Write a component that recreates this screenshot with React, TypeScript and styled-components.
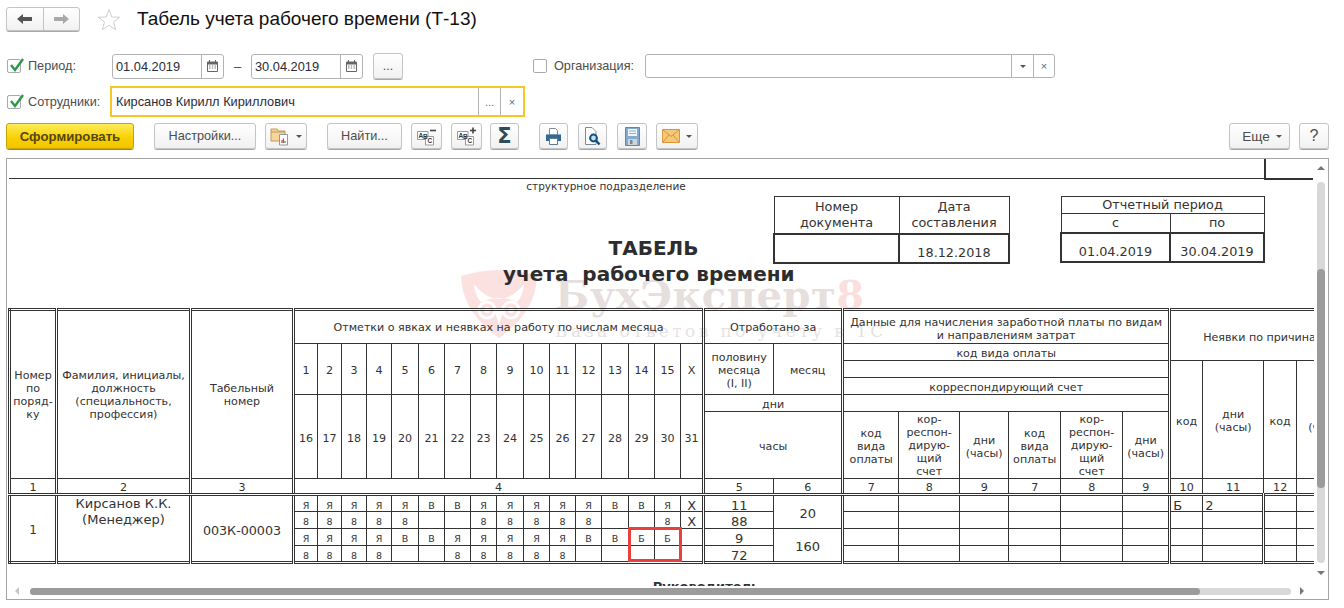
import React from "react";
import styled, {createGlobalStyle} from "styled-components";

const Global = createGlobalStyle`
  html, body {
    margin: 0;
    background: #fff;
    overflow: hidden;
  }
  body {
    font-family: "Liberation Sans", Arial, sans-serif;
    color: #333;
  }
`

const Page = styled.div`
  width: 1344px;
  height: 608px;
  overflow: hidden;
  display: flex;
  flex-direction: column;
`

const Header = styled.div`
  display: flex;
  align-items: center;
  height: 24px;
  margin: 7px 0 0 6px;
`

const NavGroup = styled.div`
  display: flex;
  width: 74px;
  height: 24px;
  box-sizing: border-box;
  border: 1px solid #c4c4c4;
  border-radius: 3px;
  box-shadow: 0 1px 0 #a8a8a8;
  background: linear-gradient(#fff, #f1f1f1);
`

const NavButton = styled.div<{$last?: boolean}>`
  flex: 1;
  display: flex;
  align-items: center;
  justify-content: center;
  border-left: ${p => p.$last ? "1px solid #c4c4c4" : "none"};
`

const Star = styled.svg`
  margin-left: 17px;
`

const Title = styled.div`
  margin-left: 16px;
  font-size: 19px;
  color: #111;
  white-space: nowrap;
`

const FilterRow = styled.div<{$height: number, $top: number}>`
  display: flex;
  align-items: center;
  height: ${p => p.$height}px;
  margin-top: ${p => p.$top}px;
  padding-left: 7px;
`

const Check = styled.div<{$left?: number}>`
  width: 14px;
  height: 14px;
  flex: none;
  margin-left: ${p => p.$left || 0}px;
  box-sizing: border-box;
  border: 1px solid #a9a9a9;
  border-radius: 2px;
  position: relative;
  background: #fff;
`

const CheckMark = styled.svg`
  position: absolute;
  left: 1px;
  top: -3px;
`

const Label = styled.div<{$width: number, $left?: number}>`
  flex: none;
  width: ${p => p.$width}px;
  margin-left: ${p => p.$left || 7}px;
  font-size: 12.7px;
  color: #4d4d4d;
  white-space: nowrap;
`

const Field = styled.div<{$width: number, $height?: number, $focus?: boolean}>`
  flex: none;
  display: flex;
  align-items: stretch;
  width: ${p => p.$width}px;
  height: ${p => p.$height || 25}px;
  box-sizing: border-box;
  border: ${p => p.$focus ? "2px solid #f6c624" : "1px solid #b3b3b3"};
  border-radius: ${p => p.$focus ? 0 : 3}px;
  background: #fff;
`

const FieldText = styled.div<{$pad?: number}>`
  flex: 1;
  display: flex;
  align-items: center;
  padding-left: ${p => p.$pad || 3}px;
  font-size: 12.8px;
  color: #2b2b38;
  white-space: nowrap;
`

const FieldButton = styled.div<{$width: number}>`
  flex: none;
  display: flex;
  align-items: center;
  justify-content: center;
  width: ${p => p.$width}px;
  border-left: 1px solid #b3b3b3;
  font-size: 11px;
  color: #666;
`

const Dash = styled.div`
  width: 27px;
  flex: none;
  text-align: center;
  font-size: 13px;
  color: #444;
`

const Toolbar = styled.div`
  display: flex;
  align-items: flex-start;
  height: 26px;
  margin-top: 6px;
  padding: 0 15px 0 6px;
`

const ToolButton = styled.div<{$width: number, $left?: number, $size?: number}>`
  flex: none;
  display: flex;
  align-items: center;
  justify-content: center;
  gap: 6px;
  width: ${p => p.$width}px;
  height: 26px;
  margin-left: ${p => p.$left || 0}px;
  box-sizing: border-box;
  border: 1px solid #c4c4c4;
  border-radius: 3px;
  box-shadow: 0 1px 0 #a8a8a8;
  background: linear-gradient(#fff, #f1f1f1);
  font-size: ${p => p.$size || 12.7}px;
  color: #4d4d4d;
  white-space: nowrap;
`

const PrimaryButton = styled(ToolButton)`
  border-color: #c9a400;
  box-shadow: 0 1px 0 #a98d10;
  background: linear-gradient(#fdeb5a, #f8d000 60%, #f2c500);
  font-weight: bold;
  font-size: 13.2px;
  color: #54470c;
`

const MoreButton = styled(ToolButton)`
  padding-left: 5px;
`

const Spacer = styled.div`
  flex: 1;
`

const Caret = styled.span`
  width: 0;
  height: 0;
  border-left: 3px solid transparent;
  border-right: 3px solid transparent;
  border-top: 3px solid #555;
`

const Sigma = styled.span`
  font-family: "DejaVu Sans", sans-serif;
  font-size: 21px;
  font-weight: bold;
  color: #2f4a58;
  line-height: 1;
`

const Frame = styled.div`
  display: grid;
  grid-template-columns: 1307px 14px;
  grid-template-rows: 427px 13px;
  width: 1323px;
  height: 442px;
  box-sizing: border-box;
  margin: 9px 0 0 6px;
  border: 1px solid #a5a5a5;
`

const Sheet = styled.div`
  position: relative;
  isolation: isolate;
  overflow: hidden;
  background: #fff;
  font-family: "DejaVu Sans", Verdana, sans-serif;
  font-size: 11.1px;
  line-height: 13px;
  color: #333;
`

const TopRule = styled.div`
  display: flex;
  height: 20px;
  padding-left: 2px;
`

const TopLine = styled.div`
  flex: 1;
  border-bottom: 1px solid #333;
`

const TopCorner = styled.div`
  flex: none;
  width: 47px;
  margin-right: 1px;
  height: 19px;
  border-left: 2px solid #333;
  border-bottom: 2px solid #333;
`

const SubCaption = styled.div`
  width: 1198px;
  height: 11px;
  margin-top: 2px;
  text-align: center;
  font-size: 10.5px;
  line-height: 11px;
`

const Middle = styled.div`
  display: flex;
  align-items: flex-start;
  height: 116px;
`

const TitleColumn = styled.div`
  flex: none;
  width: 766px;
  height: 116px;
  padding-top: 43px;
  box-sizing: border-box;
`

const FormTitle = styled.div<{$left: number}>`
  margin-left: ${p => p.$left}px;
  width: 291px;
  font-size: 20px;
  line-height: 26px;
  font-weight: bold;
  text-align: center;
  white-space: pre;
  color: #2d2d2d;
`

const DocTable = styled.table<{$left?: number}>`
  flex: none;
  margin: 4px 0 0 ${p => p.$left || 0}px;
  border-collapse: collapse;
  table-layout: fixed;
  font-size: 12.8px;
  line-height: 16px;
`

const DocCell = styled.td<{$width?: number, $height: number, $thick?: boolean}>`
  width: ${p => p.$width ? `${p.$width}px` : "auto"};
  height: ${p => p.$height}px;
  padding: ${p => p.$thick ? "0 0 1px" : 0};
  border: ${p => p.$thick ? "2px solid #333" : "1px solid #333"};
  text-align: center;
  vertical-align: ${p => p.$thick ? "bottom" : "middle"};
`

const TableWrap = styled.div`
  position: relative;
  width: 1350px;
  margin-left: 1px;
`

const Grid = styled.table<{$width: number}>`
  width: ${p => p.$width}px;
  border-collapse: collapse;
  table-layout: fixed;
  border: 3px double #333;
`

const Col = styled.col<{$width: number, $double?: boolean}>`
  width: ${p => p.$width}px;
  border-left: ${p => p.$double ? "3px double #333" : "none"};
`

const Row = styled.tr<{$height: number, $doubleBottom?: boolean}>`
  height: ${p => p.$height}px;
  border-bottom: ${p => p.$doubleBottom ? "3px double #333" : "none"};
`

const Cell = styled.td<{$size?: number, $left?: boolean, $align?: "flat" | "top" | "bottom", $double?: boolean, $tight?: boolean}>`
  padding: ${p => p.$align ? 0 : "3px"} 0 0 ${p => p.$left ? "2px" : 0};
  border: 1px solid #333;
  border-left: ${p => p.$double ? "3px double #333" : "1px solid #333"};
  text-align: ${p => p.$left ? "left" : "center"};
  vertical-align: ${p => p.$align === "top" || p.$align === "bottom" ? p.$align : "middle"};
  font-size: ${p => p.$size || 11.1}px;
  line-height: ${p => p.$align === "top" ? 16 : p.$tight ? 11 : 13}px;
  overflow: hidden;
  white-space: nowrap;
`

const Highlight = styled.div`
  position: absolute;
  left: 620px;
  top: 219px;
  width: 54px;
  height: 35px;
  box-sizing: border-box;
  border: 3px solid #e8403c;
`

const Signer = styled.div`
  width: 1398px;
  margin-top: 16px;
  text-align: center;
  font-weight: bold;
  font-size: 13px;
`

const Watermark = styled.div`
  position: absolute;
  left: 453px;
  top: 111px;
  z-index: -1;
  display: flex;
  gap: 17px;
`

const WatermarkText = styled.div`
  font-family: "DejaVu Serif", serif;
  white-space: nowrap;
`

const WatermarkName = styled.div`
  font-size: 40px;
  line-height: 50px;
  font-weight: bold;
  letter-spacing: 0.5px;
  color: #e7dfdd;
`

const WatermarkEight = styled.span`
  color: #fbdfde;
`

const WatermarkNote = styled.div`
  font-size: 17px;
  line-height: 22px;
  letter-spacing: 3.4px;
  color: #e6e2e2;
`

const VScroll = styled.div`
  display: flex;
  flex-direction: column;
  align-items: center;
  padding: 7px 0 0 0;
`

const Arrow = styled.span<{$dir: "up" | "down" | "left" | "right"}>`
  width: 0;
  height: 0;
  flex: none;
  border-style: solid;
  border-color: transparent;
  border-width: 4px;
  ${p => p.$dir === "up" ? "border-top-width: 0; border-bottom-color: #777;" : ""}
  ${p => p.$dir === "down" ? "border-bottom-width: 0; border-top-color: #777;" : ""}
  ${p => p.$dir === "left" ? "border-left-width: 0; border-right-color: #c4c4c4;" : ""}
  ${p => p.$dir === "right" ? "border-right-width: 0; border-left-color: #777;" : ""}
`

const VTrack = styled.div`
  width: 8px;
  height: 381px;
  margin: 12px 0 8px 0;
  padding-top: 87px;
  box-sizing: border-box;
  border-radius: 4px;
  background: #d8d8d8;
`

const VThumb = styled.div`
  height: 219px;
  border-radius: 4px;
  background: #9b9b9b;
`

const HScroll = styled.div`
  grid-column: 1 / -1;
  display: flex;
  align-items: center;
  padding: 0 0 3px 8px;
`

const HTrack = styled.div`
  width: 1261px;
  height: 7px;
  margin: 0 9px 0 11px;
  border-radius: 4px;
  background: #d8d8d8;
`

const HThumb = styled.div`
  width: 1170px;
  height: 7px;
  border-radius: 4px;
  background: #9b9b9b;
`

const edges = [10, 57, 191, 294, 318, 342, 367, 392, 419, 445, 471, 497, 524, 550, 576, 602, 629, 655, 681, 704, 774, 843, 899, 960, 1009, 1061, 1123, 1170, 1203, 1264, 1297, 1358];
const doubled = [1, 2, 3, 19, 21, 27];
const topDays = ["1", "2", "3", "4", "5", "6", "7", "8", "9", "10", "11", "12", "13", "14", "15", "Х"];
const lowDays = ["16", "17", "18", "19", "20", "21", "22", "23", "24", "25", "26", "27", "28", "29", "30", "31"];
const numbers = ["5", "6", "7", "8", "9", "7", "8", "9", "10", "11", "12", ""];
const marks = [
    ["Я", "Я", "Я", "Я", "Я", "В", "В", "Я", "Я", "Я", "Я", "Я", "В", "В", "Я", "Х"],
    ["8", "8", "8", "8", "8", "", "", "8", "8", "8", "8", "8", "", "", "8", "Х"],
    ["Я", "Я", "Я", "Я", "В", "В", "Я", "Я", "Я", "Я", "Я", "В", "В", "Б", "Б", ""],
    ["8", "8", "8", "8", "", "", "8", "8", "8", "8", "8", "", "", "", "", ""],
];
const worked = ["11", "88", "9", "72"];

const Icons = {
    Back: () => (
        <svg width="15" height="12" viewBox="0 0 15 12"><path d="M0 6 L6 1 V4 H15 V8 H6 V11 Z" fill="#555"/></svg>
    ),
    Forward: () => (
        <svg width="15" height="12" viewBox="0 0 15 12"><path d="M15 6 L9 1 V4 H0 V8 H9 V11 Z" fill="#a9a9a9"/></svg>
    ),
    Star: () => (
        <Star width="24" height="23" viewBox="0 0 24 23">
            <path d="M12 1.5 L14.8 9 L22.8 9.2 L16.5 14.1 L18.7 21.8 L12 17.3 L5.3 21.8 L7.5 14.1 L1.2 9.2 L9.2 9 Z" fill="#fff" stroke="#cfcfcf" strokeWidth="1"/>
        </Star>
    ),
    Mark: () => (
        <CheckMark width="16" height="16" viewBox="0 0 16 16">
            <path d="M2 8 L6 13 L14 2" fill="none" stroke="#2a9a4a" strokeWidth="2.4"/>
        </CheckMark>
    ),
    Calendar: () => (
        <svg width="11" height="12" viewBox="0 0 11 12">
            <path d="M0.5 2 H10.5 V11.5 H0.5 Z" fill="#fff" stroke="#666"/>
            <path d="M0 2 H11 V4.5 H0 Z" fill="#666"/>
            <path d="M2.5 0 V2 M8.5 0 V2" stroke="#666"/>
            <path d="M2 6 H3.5 M4.8 6 H6.2 M7.5 6 H9 M2 8 H3.5 M4.8 8 H6.2 M7.5 8 H9" stroke="#777"/>
        </svg>
    ),
    Folder: () => (
        <svg width="20" height="20" viewBox="0 0 20 20">
            <path d="M1 3 H7 L8.5 5 H15 V15 H1 Z" fill="#f4d79c" stroke="#c29a4e"/>
            <path d="M1 6 H15" stroke="#c29a4e"/>
            <path d="M9.5 8.5 H17.5 V19 H9.5 Z" fill="#fff" stroke="#8f9aa3"/>
            <path d="M12 17 V14 M13.5 17 V12.5" stroke="#d1423c" strokeWidth="1.2"/>
            <path d="M15 17 V15" stroke="#3f9a4c" strokeWidth="1.2"/>
        </svg>
    ),
    Abc: ({plus}: {plus?: boolean}) => (
        <svg width="20" height="19" viewBox="0 0 20 19">
            <path d="M0.5 4.5 H11 V12.5 H0.5 Z" fill="#fff" stroke="#999"/>
            <path d="M8.5 9.5 H16.5 V18 H8.5 Z" fill="#fff" stroke="#999"/>
            <text x="1.5" y="10.5" fontFamily="Liberation Sans" fontWeight="bold" fontSize="6.5" fill="#333">A</text>
            <text x="6" y="11.5" fontFamily="Liberation Sans" fontWeight="bold" fontSize="6.5" fill="#333">B</text>
            <text x="10.5" y="16" fontFamily="Liberation Sans" fontWeight="bold" fontSize="6.5" fill="#333">C</text>
            <path d="M13 3.5 H19" stroke="#444" strokeWidth="1.6"/>
            {plus && <path d="M16 0.5 V6.5" stroke="#444" strokeWidth="1.6"/>}
        </svg>
    ),
    Printer: () => (
        <svg width="17" height="17" viewBox="0 0 17 17">
            <path d="M4.5 0.5 H10.5 L12.5 2.5 V7 H4.5 Z" fill="#fff" stroke="#7c8a96"/>
            <path d="M1 6.5 H16 V13 H13 V11 H4 V13 H1 Z" fill="#2f6a94"/>
            <path d="M4.5 10.5 H12.5 V16.5 H4.5 Z" fill="#fff" stroke="#5d7a90"/>
        </svg>
    ),
    Preview: () => (
        <svg width="17" height="19" viewBox="0 0 17 19">
            <path d="M1.5 0.5 H8 L12 4.5 V17.5 H1.5 Z" fill="#fff" stroke="#7c8a96"/>
            <circle cx="9.5" cy="11" r="3.4" fill="#bfe0f2" stroke="#0f4f78" strokeWidth="2"/>
            <path d="M12 13.5 L15.5 17.5" stroke="#0f4f78" strokeWidth="2.4"/>
        </svg>
    ),
    Save: () => (
        <svg width="15" height="19" viewBox="0 0 15 19">
            <path d="M0.5 0.5 H14.5 V18.5 H0.5 Z" fill="#84abcd" stroke="#5c89ae"/>
            <path d="M3 2 H12 V9 H3 Z" fill="#eef4f9"/>
            <path d="M4 4 H11 M4 6.5 H11" stroke="#8fb2cf"/>
            <path d="M3 12 H12 V18 H3 Z" fill="#cfd4d9"/>
            <path d="M5 13 H7.5 V17 H5 Z" fill="#6d8aa0"/>
        </svg>
    ),
    Mail: () => (
        <svg width="18" height="14" viewBox="0 0 18 14">
            <path d="M0.5 0.5 H17.5 V13.5 H0.5 Z" fill="#f5c878" stroke="#d9953a"/>
            <path d="M1 1 L9 7.5 L17 1 M1 13 L7 6 M17 13 L11 6" fill="none" stroke="#d9953a"/>
        </svg>
    ),
    Owl: () => (
        <svg width="78" height="68" viewBox="0 0 78 68">
            <path d="M1 6 Q40 -6 77 6 Q76 42 39 68 Q2 42 1 6 Z" fill="#fbe1df"/>
            <path d="M14 14 Q22 24 30 27 Q39 31 48 27 Q56 24 64 14 Q63 26 57 32 Q39 24 21 32 Q15 26 14 14 Z" fill="#fff"/>
            <circle cx="27" cy="40" r="8" fill="none" stroke="#fff" strokeWidth="3"/>
            <circle cx="51" cy="40" r="8" fill="none" stroke="#fff" strokeWidth="3"/>
            <circle cx="27" cy="40" r="3" fill="#fff"/>
            <circle cx="51" cy="40" r="3" fill="#fff"/>
            <path d="M35 40 L39 52 L43 40 Z M8 40 H18 M60 40 H70" fill="#fff" stroke="#fff" strokeWidth="1.5"/>
        </svg>
    ),
}

export default function App() {
    const total = edges[edges.length - 1] - edges[0];
    return (
        <Page>
            <Global/>
            <Header>
                <NavGroup>
                    <NavButton><Icons.Back/></NavButton>
                    <NavButton $last><Icons.Forward/></NavButton>
                </NavGroup>
                <Icons.Star/>
                <Title>Табель учета рабочего времени (Т-13)</Title>
            </Header>

            <FilterRow $height={26} $top={22}>
                <Check><Icons.Mark/></Check>
                <Label $width={84}>Период:</Label>
                <Field $width={112}>
                    <FieldText>01.04.2019</FieldText>
                    <FieldButton $width={21}><Icons.Calendar/></FieldButton>
                </Field>
                <Dash>–</Dash>
                <Field $width={112}>
                    <FieldText>30.04.2019</FieldText>
                    <FieldButton $width={21}><Icons.Calendar/></FieldButton>
                </Field>
                <ToolButton $width={30} $left={10}>...</ToolButton>
                <Check $left={130}/>
                <Label $width={91}>Организация:</Label>
                <Field $width={410} $height={24}>
                    <FieldText/>
                    <FieldButton $width={21}><Caret/></FieldButton>
                    <FieldButton $width={20}>×</FieldButton>
                </Field>
            </FilterRow>

            <FilterRow $height={31} $top={7}>
                <Check><Icons.Mark/></Check>
                <Label $width={82}>Сотрудники:</Label>
                <Field $width={415} $height={31} $focus>
                    <FieldText $pad={4}>Кирсанов Кирилл Кириллович</FieldText>
                    <FieldButton $width={21}>...</FieldButton>
                    <FieldButton $width={22}>×</FieldButton>
                </Field>
            </FilterRow>

            <Toolbar>
                <PrimaryButton $width={128}>Сформировать</PrimaryButton>
                <ToolButton $width={102} $left={20}>Настройки...</ToolButton>
                <ToolButton $width={42} $left={9}><Icons.Folder/><Caret/></ToolButton>
                <ToolButton $width={75} $left={20}>Найти...</ToolButton>
                <ToolButton $width={31} $left={9}><Icons.Abc/></ToolButton>
                <ToolButton $width={31} $left={9}><Icons.Abc plus/></ToolButton>
                <ToolButton $width={29} $left={8}><Sigma>Σ</Sigma></ToolButton>
                <ToolButton $width={29} $left={20}><Icons.Printer/></ToolButton>
                <ToolButton $width={29} $left={10}><Icons.Preview/></ToolButton>
                <ToolButton $width={30} $left={10}><Icons.Save/></ToolButton>
                <ToolButton $width={42} $left={9}><Icons.Mail/><Caret/></ToolButton>
                <Spacer/>
                <MoreButton $width={61} $size={13.5}>Еще <Caret/></MoreButton>
                <ToolButton $width={30} $left={9} $size={16}>?</ToolButton>
            </Toolbar>

            <Frame>
                <Sheet>
                    <Watermark>
                        <Icons.Owl/>
                        <WatermarkText>
                            <WatermarkName>БухЭксперт<WatermarkEight>8</WatermarkEight></WatermarkName>
                            <WatermarkNote>База ответов по учету в 1С</WatermarkNote>
                        </WatermarkText>
                    </Watermark>

                    <TopRule>
                        <TopLine/>
                        <TopCorner/>
                    </TopRule>
                    <SubCaption>структурное подразделение</SubCaption>
                    <Middle>
                        <TitleColumn>
                            <FormTitle $left={501}>ТАБЕЛЬ</FormTitle>
                            <FormTitle $left={496}>учета  рабочего времени</FormTitle>
                        </TitleColumn>
                        <DocTable>
                            <tbody>
                                <tr>
                                    <DocCell $width={124} $height={36}>Номер<br/>документа</DocCell>
                                    <DocCell $width={109} $height={36}>Дата<br/>составления</DocCell>
                                </tr>
                                <tr>
                                    <DocCell $height={26} $thick/>
                                    <DocCell $height={26} $thick>18.12.2018</DocCell>
                                </tr>
                            </tbody>
                        </DocTable>
                        <DocTable $left={50}>
                            <tbody>
                                <tr>
                                    <DocCell $height={16} colSpan={2}>Отчетный период</DocCell>
                                </tr>
                                <tr>
                                    <DocCell $width={108} $height={18}>с</DocCell>
                                    <DocCell $width={93} $height={18}>по</DocCell>
                                </tr>
                                <tr>
                                    <DocCell $height={26} $thick>01.04.2019</DocCell>
                                    <DocCell $height={26} $thick>30.04.2019</DocCell>
                                </tr>
                            </tbody>
                        </DocTable>
                    </Middle>

                    <TableWrap>
                        <Grid $width={total}>
                            <colgroup>
                                {edges.slice(1).map((edge, i) => (
                                    <Col key={i} $width={edge - edges[i]} $double={doubled.includes(i)}/>
                                ))}
                            </colgroup>
                            <tbody>
                                <Row $height={34}>
                                    <Cell rowSpan={6} $align="flat">Номер<br/>по<br/>поряд-<br/>ку</Cell>
                                    <Cell rowSpan={6} $align="flat">Фамилия, инициалы,<br/>должность<br/>(специальность,<br/>профессия)</Cell>
                                    <Cell rowSpan={6} $align="flat">Табельный<br/>номер</Cell>
                                    <Cell colSpan={16} $align="flat">Отметки о явках и неявках на работу по числам месяца</Cell>
                                    <Cell colSpan={2} $align="flat">Отработано за</Cell>
                                    <Cell colSpan={6}>Данные для начисления заработной платы по видам<br/>и направлениям затрат</Cell>
                                    <Cell colSpan={4} rowSpan={2}>Неявки по причинам</Cell>
                                </Row>
                                <Row $height={17}>
                                    {topDays.map((day, i) => <Cell key={i} rowSpan={3}>{day}</Cell>)}
                                    <Cell rowSpan={3}>половину<br/>месяца<br/>(I, II)</Cell>
                                    <Cell rowSpan={3}>месяц</Cell>
                                    <Cell colSpan={6}>код вида оплаты</Cell>
                                </Row>
                                <Row $height={17}>
                                    <Cell colSpan={6}/>
                                    <Cell rowSpan={4}>код</Cell>
                                    <Cell rowSpan={4}>дни<br/>(часы)</Cell>
                                    <Cell rowSpan={4}>код</Cell>
                                    <Cell rowSpan={4}>дни<br/>(часы)</Cell>
                                </Row>
                                <Row $height={17}>
                                    <Cell colSpan={6}>корреспондирующий счет</Cell>
                                </Row>
                                <Row $height={17}>
                                    {lowDays.map(day => <Cell key={day} rowSpan={2}>{day}</Cell>)}
                                    <Cell colSpan={2}>дни</Cell>
                                    <Cell colSpan={6}/>
                                </Row>
                                <Row $height={67}>
                                    <Cell colSpan={2}>часы</Cell>
                                    <Cell>код<br/>вида<br/>оплаты</Cell>
                                    <Cell $align="bottom">кор-<br/>респон-<br/>дирую-<br/>щий<br/>счет</Cell>
                                    <Cell>дни<br/>(часы)</Cell>
                                    <Cell>код<br/>вида<br/>оплаты</Cell>
                                    <Cell $align="bottom">кор-<br/>респон-<br/>дирую-<br/>щий<br/>счет</Cell>
                                    <Cell>дни<br/>(часы)</Cell>
                                </Row>
                                <Row $height={15} $doubleBottom>
                                    <Cell $tight>1</Cell>
                                    <Cell $tight>2</Cell>
                                    <Cell $tight>3</Cell>
                                    <Cell colSpan={16} $tight>4</Cell>
                                    {numbers.map((n, i) => <Cell key={i} $tight>{n}</Cell>)}
                                </Row>
                                {marks.map((row, r) => (
                                    <Row key={r} $height={17}>
                                        {r === 0 && <Cell rowSpan={4} $size={12}>1</Cell>}
                                        {r === 0 && <Cell rowSpan={4} $size={13} $align="top">Кирсанов К.К.<br/>(Менеджер)</Cell>}
                                        {r === 0 && <Cell rowSpan={4} $size={12.7}>003К-00003</Cell>}
                                        {row.map((mark, i) => (
                                            <Cell key={i} $tight $size={mark === "Х" ? 13 : 9.5}>{mark}</Cell>
                                        ))}
                                        <Cell $tight $size={13}>{worked[r]}</Cell>
                                        {r === 0 && <Cell rowSpan={2} $size={13}>20</Cell>}
                                        {r === 2 && <Cell rowSpan={2} $size={13}>160</Cell>}
                                        <Cell $tight/><Cell $tight/><Cell $tight/><Cell $tight/><Cell $tight/><Cell $tight/>
                                        <Cell $size={13} $left $tight>{r === 0 ? "Б" : ""}</Cell>
                                        <Cell $size={13} $left $tight>{r === 0 ? "2" : ""}</Cell>
                                        <Cell $double $tight/>
                                        <Cell $tight/>
                                    </Row>
                                ))}
                            </tbody>
                        </Grid>
                        <Highlight/>
                    </TableWrap>
                    <Signer>Руководитель</Signer>
                </Sheet>
                <VScroll>
                    <Arrow $dir="up"/>
                    <VTrack><VThumb/></VTrack>
                    <Arrow $dir="down"/>
                </VScroll>
                <HScroll>
                    <Arrow $dir="left"/>
                    <HTrack><HThumb/></HTrack>
                    <Arrow $dir="right"/>
                </HScroll>
            </Frame>
        </Page>
    )
}
